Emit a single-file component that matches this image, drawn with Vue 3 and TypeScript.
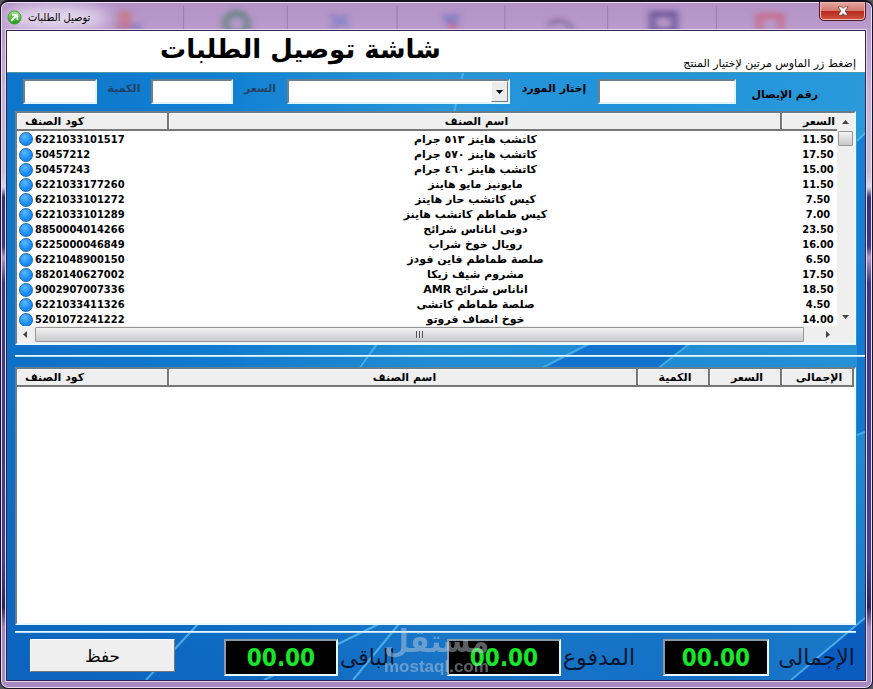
<script setup lang="ts">
import { ref } from 'vue'

interface Item {
  code: string
  name: string
  price: string
}

const items: Item[] = [
  { code: '6221033101517', name: 'كاتشب هاينز ٥١٣ جرام', price: '11.50' },
  { code: '50457212', name: 'كاتشب هاينز ٥٧٠ جرام', price: '17.50' },
  { code: '50457243', name: 'كاتشب هاينز ٤٦٠ جرام', price: '15.00' },
  { code: '6221033177260', name: 'مايونيز مايو هاينز', price: '11.50' },
  { code: '6221033101272', name: 'كيس كاتشب حار هاينز', price: '7.50' },
  { code: '6221033101289', name: 'كيس طماطم كاتشب هاينز', price: '7.00' },
  { code: '8850004014266', name: 'دونى اناناس شرائح', price: '23.50' },
  { code: '6225000046849', name: 'رويال خوخ شراب', price: '16.00' },
  { code: '6221048900150', name: 'صلصة طماطم فاين فودز', price: '6.50' },
  { code: '8820140627002', name: 'مشروم شيف زيكا', price: '17.50' },
  { code: '9002907007336', name: 'اناناس شرائح AMR', price: '18.50' },
  { code: '6221033411326', name: 'صلصة طماطم كاتشى', price: '4.50' },
  { code: '5201072241222', name: 'خوخ انصاف فروتو', price: '14.00' },
]

const quantity = ref('')
const price = ref('')
const supplier = ref('')
const receipt = ref('')
</script>

<template>
  <div class="window">
    <svg class="glass" viewBox="0 0 873 30" preserveAspectRatio="none" aria-hidden="true">
      <defs>
        <filter id="soft" x="-30%" y="-50%" width="160%" height="200%"><feGaussianBlur stdDeviation="3" /></filter>
        <filter id="haze" x="-50%" y="-100%" width="200%" height="300%"><feGaussianBlur stdDeviation="8" /></filter>
      </defs>
      <ellipse cx="55" cy="17" rx="52" ry="13" fill="#e6daee" filter="url(#haze)" />
      <g fill="none" stroke="#846a9c" opacity=".6">
        <path d="M183 4v26M287 4v26M397 4v26M505 4v26M608 4v26M717 4v26" />
      </g>
      <g filter="url(#soft)" opacity=".6">
        <circle cx="124" cy="16" r="7" fill="#d26b62" />
        <path d="M116 22h18v8h-18z" fill="#b76582" />
        <path d="M132 23h9v7h-9z" fill="#6870c0" />
        <circle cx="236" cy="23" r="11" fill="none" stroke="#3c7b60" stroke-width="7" />
        <path d="M330 14l18 12M347 14l-16 14" stroke="#6674c4" stroke-width="5" />
        <path d="M443 14l16 10M459 13l-14 10" stroke="#5d6bc1" stroke-width="5" />
        <circle cx="452" cy="26" r="4" fill="#ca4e66" />
        <path d="M548 25q15-12 25 5" fill="none" stroke="#5d5179" stroke-width="4" />
        <path d="M653 13h22v18h-22z" fill="none" stroke="#493783" stroke-width="7" />
        <path d="M760 30V15h22v15" fill="none" stroke="#d34f62" stroke-width="6" />
      </g>
    </svg>
    <header class="titlebar">
      <svg class="app-icon" viewBox="0 0 16 16" aria-hidden="true">
        <defs>
          <linearGradient id="leaf" x2="0" y2="1"><stop stop-color="#9be27b" /><stop offset="1" stop-color="#169c12" /></linearGradient>
        </defs>
        <circle cx="8" cy="8" r="7" fill="url(#leaf)" stroke="#4a9b46" />
        <path d="M4.500 11.500 10 6M5.500 5h5.500v5.500" fill="none" stroke="#fff" stroke-width="2" />
      </svg>
      <span class="caption" dir="rtl">توصيل الطلبات</span>
      <button class="close" type="button" aria-label="إغلاق">
        <svg viewBox="0 0 14 12" aria-hidden="true">
          <path d="M1 1h4l2 2 2-2h4L9.500 6l3.500 5H9L7 9l-2 2H1l3.500-5z" fill="#fff" stroke="#5b2a2e" stroke-width=".8" />
        </svg>
      </button>
    </header>

    <main class="client">
      <div class="banner">
        <h1 dir="rtl">شاشة توصيل الطلبات</h1>
        <p dir="rtl">إضغط زر الماوس مرتين لإختيار المنتج</p>
      </div>

      <div class="panel">
        <svg class="backdrop" viewBox="0 0 858 607" preserveAspectRatio="none" aria-hidden="true">
          <defs>
            <linearGradient id="sky"><stop stop-color="#0e75c9" /><stop offset=".25" stop-color="#1280d2" /><stop offset=".5" stop-color="#2795da" /><stop offset=".75" stop-color="#2193d9" /><stop offset="1" stop-color="#2a9adb" /></linearGradient>
            <linearGradient id="deep" x2="0" y2="1"><stop offset=".3" stop-color="#0b55b5" stop-opacity="0" /><stop offset="1" stop-color="#0b55b5" stop-opacity=".55" /></linearGradient>
          </defs>
          <path fill="url(#sky)" d="M0 0h858v607H0z" />
          <path fill="url(#deep)" d="M0 0h858v607H0z" />
          <path fill="#0868ca" opacity=".7" d="M582 271H682L650 296H533z" />
          <path fill="#0868ca" opacity=".55" d="M850 68 858 62V357L850 362z" />
          <path fill="#0754bd" opacity=".75" d="M858 545V607H784z" />
          <g fill="none" stroke="#62c7f5" stroke-width="2">
            <path d="M456 0 447 40M370 271 352 296M582 271 533 296M682 271 650 296M850 68 858 60M850 362 858 359" opacity=".6" />
            <path d="M191 551 139 607M372 551 257 607M392 551 346 607M858 545 784 607" opacity=".7" />
          </g>
        </svg>

        <form class="filters" @submit.prevent>
          <input id="qty" v-model="quantity" class="sunken w-qty" type="text" />
          <label for="qty" class="dim l-qty" dir="rtl">الكمية</label>
          <input id="price" v-model="price" class="sunken w-price" type="text" />
          <label for="price" class="dim l-price" dir="rtl">السعر</label>
          <div class="combo">
            <select id="supplier" v-model="supplier" class="sunken">
              <option value=""></option>
            </select>
            <span class="drop" aria-hidden="true"><svg viewBox="0 0 7 4"><path d="M0 0h7L3.500 4z" /></svg></span>
          </div>
          <label for="supplier" class="l-supplier" dir="rtl">إختار المورد</label>
          <input id="receipt" v-model="receipt" class="sunken w-receipt" type="text" />
          <label for="receipt" class="l-receipt" dir="rtl">رقم الإيصال</label>
        </form>

        <section class="list products">
          <div class="viewport">
            <table>
              <colgroup><col class="c-code" /><col /><col class="c-num" /></colgroup>
              <thead>
                <tr><th class="start" dir="rtl">كود الصنف</th><th dir="rtl">اسم الصنف</th><th dir="rtl">السعر</th></tr>
              </thead>
              <tbody>
                <tr v-for="item in items" :key="item.code">
                  <td class="code"><i class="ball"></i>{{ item.code }}</td>
                  <td dir="rtl">{{ item.name }}</td>
                  <td class="amount">{{ item.price }}</td>
                </tr>
              </tbody>
            </table>
          </div>
          <div class="vbar" aria-hidden="true">
            <svg viewBox="0 0 7 4"><path d="M0 4h7L3.500 0z" /></svg>
            <span class="thumb"></span>
            <svg viewBox="0 0 7 4"><path d="M0 0h7L3.500 4z" /></svg>
          </div>
          <div class="hbar" aria-hidden="true">
            <svg viewBox="0 0 4 7"><path d="M4 0v7L0 3.500z" /></svg>
            <span class="thumb"><i></i><i></i><i></i></span>
            <svg viewBox="0 0 4 7"><path d="M0 0v7l4-3.500z" /></svg>
          </div>
        </section>

        <hr class="rule wide" />

        <section class="list order">
          <table>
            <colgroup><col class="c-code" /><col /><col class="c-num" /><col class="c-num" /><col class="c-num" /></colgroup>
            <thead>
              <tr>
                <th class="start" dir="rtl">كود الصنف</th><th dir="rtl">اسم الصنف</th><th dir="rtl">الكمية</th>
                <th dir="rtl">السعر</th><th dir="rtl">الإجمالى</th>
              </tr>
            </thead>
          </table>
        </section>

        <hr class="rule" />

        <footer class="totals">
          <button class="save" type="button">حفظ</button>
          <div class="total rest"><output id="rest">00.00</output><label for="rest" dir="rtl">الباقى</label></div>
          <div class="total paid"><output id="paid">00.00</output><label for="paid" dir="rtl">المدفوع</label></div>
          <div class="total sum"><output id="sum">00.00</output><label for="sum" dir="rtl">الإجمالى</label></div>
          <div class="watermark"><strong dir="rtl">مستقل</strong><span>mostaql.com</span></div>
        </footer>
      </div>
    </main>
  </div>
</template>

<style>
body {
  margin: 0;
  background: #55555e;
}
</style>

<style scoped>
* {
  box-sizing: border-box;
}

.window {
  position: relative;
  display: flex;
  flex-direction: column;
  min-height: 100vh;
  padding: 3px 6px 7px 5px;
  overflow: hidden;
  border: 1px solid #17121f;
  border-top-width: 2px;
  border-radius: 8px;
  box-shadow: inset 0 0 0 1px #e9def2;
  background: linear-gradient(#b391c6 0, #c9b3d8 90px, #c6bcd9 170px, #d8d6ec 185px, #372f7d 195px, #3d368a 245px, #b496cb 255px, #3c3688 280px, #443d94 560px, #2a2262 605px, #a583bf 625px, #a88ac2 100%);
  font: 11px/15px "DejaVu Sans", sans-serif;
  color: #000;
}

.glass {
  position: absolute;
  inset: 0 0 auto;
  width: 100%;
  height: 28px;
}

.titlebar {
  position: relative;
  display: flex;
  align-items: center;
  height: 25px;
  padding-left: 1px;
}

.app-icon {
  width: 15px;
  height: 15px;
}

.caption {
  margin-left: 6px;
  font-family: "DejaVu Sans Condensed", "DejaVu Sans", sans-serif;
}

.close {
  display: flex;
  align-items: center;
  justify-content: center;
  align-self: flex-start;
  width: 47px;
  height: 19px;
  margin-left: auto;
  margin-top: -3px;
  padding: 0;
  border: 1px solid #4b1a24;
  border-top: 0;
  border-radius: 0 0 5px 5px;
  background: linear-gradient(#e4a79f 0, #d47a70 48%, #b8291c 50%, #cf5341 100%);
  box-shadow: inset 0 0 0 1px #f0b9b3;
}

.close svg {
  width: 12px;
  height: 10px;
}

.client {
  position: relative;
  display: flex;
  flex: 1;
  flex-direction: column;
  border: 1px solid #2e2550;
  box-shadow: 0 0 0 1px #e4d8ee;
}

.banner {
  display: flex;
  justify-content: space-between;
  height: 42px;
  padding: 0 9px 0 153px;
  border-bottom: 1px solid #4d97a8;
  background: #fff;
}

h1 {
  margin: 0;
  font-size: 26px;
  font-weight: bold;
  line-height: 36px;
}

.banner p {
  margin: 0;
  align-self: flex-end;
  padding-bottom: 1px;
}

.panel {
  position: relative;
  display: flex;
  flex: 1;
  flex-direction: column;
  padding: 6px 9px 4px 8px;
  background: #1580d0;
}

.backdrop {
  position: absolute;
  inset: 0;
  width: 100%;
  height: 100%;
}

.filters,
.list,
.rule,
.totals {
  position: relative;
}

.filters {
  display: flex;
  height: 25px;
  padding: 0 38px 0 8px;
  font-weight: bold;
  line-height: 20px;
}

.filters label {
  flex: none;
  text-align: center;
}

.filters .dim {
  color: #23415f;
}

.sunken {
  height: 25px;
  padding: 2px 4px;
  border: 2px solid;
  border-color: #6d7f8e #dff5fb #dff5fb #6d7f8e;
  border-radius: 0;
  outline: 0;
  background: #fff;
  font: inherit;
}

.w-qty { width: 74px; }
.w-price { width: 82px; }
.w-receipt { width: 138px; }
.l-qty { width: 54px; }
.l-price { width: 54px; }
.l-supplier { width: 88px; }

.filters .l-receipt {
  width: 82px;
  line-height: 32px;
  text-align: right;
}

.combo {
  position: relative;
  flex: 1;
}

.combo select {
  width: 100%;
  appearance: none;
}

.drop {
  position: absolute;
  top: 2px;
  right: 2px;
  display: flex;
  align-items: center;
  justify-content: center;
  width: 17px;
  height: 21px;
  border: 1px solid;
  border-color: #fff #777 #777 #fff;
  background: #ececec;
  pointer-events: none;
}

.drop svg {
  width: 7px;
  height: 4px;
}

.list {
  border: 2px solid;
  border-color: #6c7d8a #e8f8fb #e8f8fb #6c7d8a;
  background: #fff;
}

.products {
  display: grid;
  grid-template: 213px 17px / minmax(0, 1fr) 17px;
  margin-top: 7px;
}

.viewport {
  overflow: hidden;
}

.viewport table {
  width: calc(100% + 17px);
}

table {
  width: 100%;
  table-layout: fixed;
  border-collapse: separate;
  border-spacing: 0;
  font-weight: bold;
}

.c-code { width: 152px; }
.c-num { width: 72px; }

th {
  height: 18px;
  padding: 2px 6px 0;
  border-right: 2px solid #777;
  border-bottom: 2px solid #777;
  box-shadow: inset 1px 1px #fff;
  background: #efefef;
  line-height: 14px;
}

.start {
  text-align: left;
}

tbody tr:first-child td {
  border-top: 1px solid #fff;
}

td {
  height: 15px;
  padding: 0;
  text-align: center;
  white-space: nowrap;
}

.code,
.amount {
  font-family: "DejaVu Sans Condensed", "DejaVu Sans", sans-serif;
}

.code {
  display: flex;
  align-items: center;
  gap: 2px;
  padding-left: 2px;
}

.ball {
  width: 14px;
  height: 14px;
  border: 1px solid #1a6ab5;
  border-radius: 50%;
  background: radial-gradient(circle at 40% 30%, #5cb9ff, #1c8ff8 55%, #0b78e4);
}

.vbar,
.hbar {
  display: flex;
  align-items: center;
  background: #efefef;
}

.vbar {
  flex-direction: column;
  padding: 7px 0;
}

.hbar {
  grid-column: 1 / -1;
  padding: 0 24px 0 6px;
}

.vbar svg { width: 7px; height: 4px; fill: #444; }
.hbar svg { width: 4px; height: 7px; fill: #444; }
.vbar svg:last-child { margin-top: auto; }
.hbar svg:last-child { margin-left: auto; }

.thumb {
  border: 1px solid #969696;
  border-radius: 1px;
  background: linear-gradient(#f3f3f3, #e0e0e2 45%, #c9c9cc);
}

.vbar .thumb {
  width: 15px;
  height: 15px;
  margin-top: 7px;
}

.hbar .thumb {
  display: flex;
  flex: 1;
  align-items: center;
  justify-content: center;
  gap: 2px;
  height: 15px;
  margin: 0 22px 0 8px;
}

.thumb i {
  width: 1px;
  height: 7px;
  background: #555;
}

.rule {
  height: 2px;
  margin: 10px 0;
  border: 0;
  border-top: 1px solid #e7fbff;
  border-bottom: 1px solid #b5def0;
  background: none;
}

.wide {
  margin-right: -9px;
}

.order {
  flex: 1;
  margin-bottom: -4px;
}

.totals {
  display: flex;
  height: 37px;
  margin-top: -4px;
  padding: 0 1px 0 15px;
}

.save {
  width: 145px;
  height: 33px;
  margin-right: auto;
  border: 1px solid;
  border-color: #fff #777 #777 #fff;
  background: #efefef;
  font: 17px/24px "DejaVu Sans", sans-serif;
}

.total {
  display: flex;
  align-items: center;
  justify-content: space-between;
  font-size: 22px;
}

.rest {
  width: 171px;
  margin-right: 52px;
}

.paid {
  width: 188px;
  margin-right: 28px;
}

.sum {
  width: 192px;
}

.total label {
  color: #04172f;
  line-height: 32px;
}

.total output {
  width: 114px;
  height: 37px;
  border: 2px solid;
  border-color: #8b9aa5 #e8faff #e8faff #8b9aa5;
  background: #000;
  color: #17e62a;
  font-family: "DejaVu Sans Condensed", "DejaVu Sans", sans-serif;
  font-size: 24px;
  font-weight: bold;
  line-height: 34px;
  text-align: center;
}

.sum output {
  width: 106px;
}

.watermark {
  position: absolute;
  top: -16px;
  left: 369px;
  display: flex;
  flex-direction: column;
  color: #c9d2dc;
  opacity: .45;
  pointer-events: none;
}

.watermark strong {
  font: bold 32px/36px "DejaVu Sans Condensed", "DejaVu Sans", sans-serif;
  text-align: center;
}

.watermark span {
  font: bold 17px/16px "Liberation Sans", sans-serif;
}
</style>
